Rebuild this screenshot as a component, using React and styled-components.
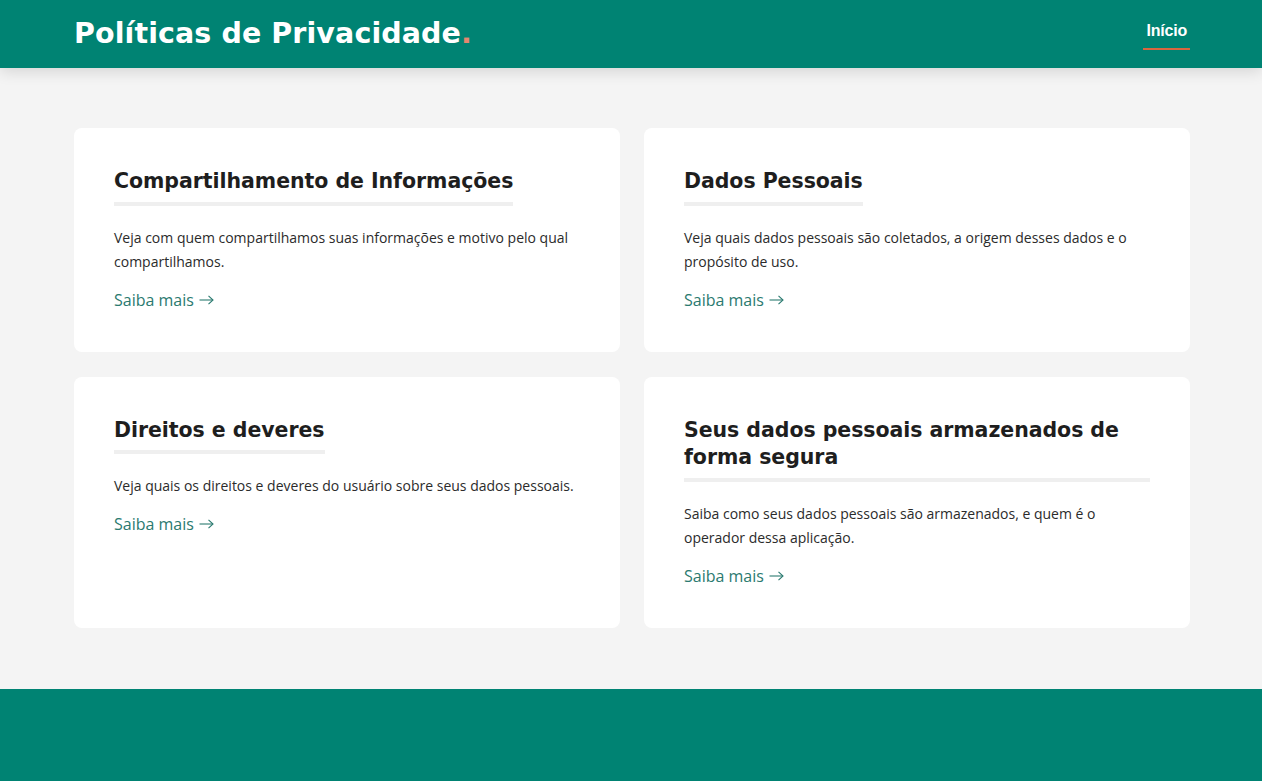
import React from "react";
import styled, { createGlobalStyle } from "styled-components";

const Global = createGlobalStyle`
  html, body { margin: 0; padding: 0; }
  body { background: #f4f4f4; font-family: "Open Sans", "Liberation Sans", sans-serif; }
  * { box-sizing: border-box; }
`;

const Header = styled.header`
  height: 68px;
  background: #008373;
  box-shadow: 0 4px 14px rgba(0, 0, 0, 0.12);
  position: relative;
  z-index: 1;
`;

const Inner = styled.div`
  width: 1118px;
  padding-left: 2px;
  margin: 0 auto;
`;

const HeaderInner = styled(Inner)`
  height: 100%;
  display: flex;
  align-items: center;
  justify-content: space-between;
`;

const Brand = styled.h1`
  margin: 0;
  color: #fff;
  font-family: "DejaVu Sans", sans-serif;
  font-weight: 700;
  font-size: 28.5px;
  letter-spacing: 0.1px;
  line-height: 1;
`;

const Dot = styled.span`
  color: #e5876f;
`;

const NavLink = styled.a`
  color: #fff;
  font-family: "Liberation Sans", Arial, sans-serif;
  font-weight: 700;
  font-size: 16px;
  text-decoration: none;
  padding: 0 3px 8px 3px;
  border-bottom: 2px solid #d9663f;
  margin-top: 4px;
  letter-spacing: -0.2px;
`;

const Main = styled.main`
  padding: 60px 0 61px;
`;

const Grid = styled(Inner)`
  display: grid;
  grid-template-columns: 1fr 1fr;
  column-gap: 24px;
  row-gap: 25px;
`;

const Card = styled.article`
  background: #fff;
  border-radius: 8px;
  padding: 40px 40px 40px;
`;

const Title = styled.h2`
  display: inline-block;
  margin: 0;
  font-family: "DejaVu Sans", sans-serif;
  font-weight: 700;
  font-size: 20.5px;
  line-height: 27.5px;
  color: #1e1e1e;
  padding-bottom: 6px;
  border-bottom: 4px solid #efefef;
  letter-spacing: -0.05px;
`;

const Desc = styled.p`
  margin: 20px 0 0;
  font-size: 14px;
  line-height: 24px;
  color: #2b2b2b;
`;

const More = styled.a`
  display: inline-flex;
  align-items: center;
  gap: 5px;
  margin-top: 14px;
  font-size: 16px;
  line-height: 24px;
  color: #2b7a70;
  text-decoration: none;
`;

const Footer = styled.footer`
  height: 92px;
  background: #008373;
`;

const Arrow = () => (
  <svg width="15" height="10" viewBox="0 0 15 10" fill="none" stroke="#2b7a70" strokeWidth="1.1">
    <path d="M0.5 5H14" />
    <path d="M9.5 0.8L14 5L9.5 9.2" />
  </svg>
);

const cards = [
  {
    title: "Compartilhamento de Informações",
    desc: "Veja com quem compartilhamos suas informações e motivo pelo qual compartilhamos.",
  },
  {
    title: "Dados Pessoais",
    desc: "Veja quais dados pessoais são coletados, a origem desses dados e o propósito de uso.",
  },
  {
    title: "Direitos e deveres",
    desc: "Veja quais os direitos e deveres do usuário sobre seus dados pessoais.",
  },
  {
    title: "Seus dados pessoais armazenados de forma segura",
    desc: "Saiba como seus dados pessoais são armazenados, e quem é o operador dessa aplicação.",
  },
];

export default function App() {
  return (
    <>
      <Global />
      <Header>
        <HeaderInner>
          <Brand>
            Políticas de Privacidade<Dot>.</Dot>
          </Brand>
          <NavLink href="#">Início</NavLink>
        </HeaderInner>
      </Header>
      <Main>
        <Grid>
          {cards.map((c) => (
            <Card key={c.title}>
              <Title>{c.title}</Title>
              <Desc>{c.desc}</Desc>
              <More href="#">
                Saiba mais <Arrow />
              </More>
            </Card>
          ))}
        </Grid>
      </Main>
      <Footer />
    </>
  );
}
